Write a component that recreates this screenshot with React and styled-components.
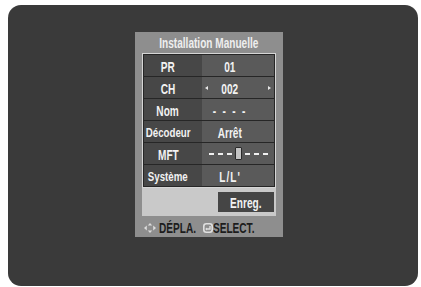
import React from "react";
import styled, { createGlobalStyle } from "styled-components";

const Global = createGlobalStyle`
  html, body { margin: 0; padding: 0; background: #ffffff; }
  body { font-family: "Liberation Sans", Arial, sans-serif; }
`;

const Page = styled.div`
  width: 421px;
  height: 287px;
  padding: 5px 3px 1px 8px;
  box-sizing: border-box;
  display: flex;
`;

const Screen = styled.div`
  flex: 1;
  background: #3a3a3a;
  border-radius: 13px;
  padding: 27px 0 0 127px;
  display: flex;
  align-items: flex-start;
`;

const Menu = styled.div`
  width: 148px;
  background: #8e8e8e;
  display: flex;
  flex-direction: column;
  font-weight: bold;
`;

const Narrow = styled.span`
  display: inline-block;
  white-space: nowrap;
  transform: scaleX(0.72);
  transform-origin: ${(p) => p.$origin || "center"};
  ${(p) => (p.$w ? `width: ${p.$w}px;` : "")}
`;

const Title = styled.div`
  height: 21px;
  line-height: 22px;
  text-align: center;
  color: #eeeeee;
  font-size: 14px;
`;

const Table = styled.div`
  margin: 0 7px;
  border: 1px solid #d6d6d6;
  background: #262626;
  padding: 1px;
  display: grid;
  grid-template-columns: 58px 72px;
  grid-auto-rows: 21px;
  row-gap: 1px;
`;

const Cell = styled.div`
  background: ${(p) => (p.$value ? "#5a5a5a" : "#474747")};
  color: #f2f2f2;
  font-size: ${(p) => (p.$small ? "13.5px" : "14px")};
  display: flex;
  align-items: center;
  justify-content: center;
  padding-right: ${(p) => (p.$flush ? "0" : p.$value ? "16px" : "10px")};
  padding-top: 2px;
  box-sizing: border-box;
  position: relative;
  letter-spacing: ${(p) => p.$spacing || 0}px;
`;

const Arrow = styled.span`
  position: absolute;
  top: 50%;
  ${(p) => (p.$right ? "right: 3px;" : "left: 3px;")}
  margin-top: -2px;
  width: 0;
  height: 0;
  border-top: 2.5px solid transparent;
  border-bottom: 2.5px solid transparent;
  ${(p) =>
    p.$right ? "border-left: 3px solid #e8e8e8;" : "border-right: 3px solid #e8e8e8;"}
`;

const Slider = styled.div`
  display: flex;
  align-items: center;
  gap: 4px;
  margin-top: -2px;
`;

const Dash = styled.span`
  width: 5px;
  height: 2px;
  background: #f0f0f0;
`;

const Thumb = styled.span`
  width: 5px;
  height: 11px;
  background: #c4c4c4;
  border: 1px solid #2a2a2a;
  border-radius: 1px;
  margin: 0 -1px;
`;

const SaveArea = styled.div`
  margin: 0 7px;
  height: 28px;
  background: #c9c9c9;
  display: flex;
  justify-content: flex-end;
  align-items: center;
  padding: 0 2px 0 0;
`;

const SaveButton = styled.div`
  width: 56px;
  height: 20px;
  background: #454545;
  color: #f2f2f2;
  font-size: 14px;
  display: flex;
  align-items: center;
  justify-content: center;
  padding-top: 1px;
  box-sizing: border-box;
`;

const Footer = styled.div`
  height: 21px;
  display: flex;
  align-items: center;
  padding: 2px 0 0 9px;
  box-sizing: border-box;
  color: #1c1c1c;
  font-size: 14px;
`;

const IconSlot = styled.span`
  display: flex;
  margin-right: ${(p) => p.$mr}px;
`;

const rows = [
  { label: "PR", value: "01" },
  { label: "CH", value: "002", arrows: true },
  { label: "Nom", value: "- - - -", spacing: 2.5 },
  { label: "Décodeur", value: "Arrêt", small: true },
  { label: "MFT", slider: true },
  { label: "Système", value: "L/L'", small: true, spacing: 1.5 },
];

const MoveIcon = () => (
  <svg width="12" height="10" viewBox="0 0 12 10">
    <g fill="#dcdcdc">
      <polygon points="0,5 2.8,2.6 2.8,7.4" />
      <polygon points="12,5 9.2,2.6 9.2,7.4" />
      <polygon points="6,0 3.8,2.4 8.2,2.4" />
      <polygon points="6,10 3.8,7.6 8.2,7.6" />
    </g>
  </svg>
);

const EnterIcon = () => (
  <svg width="10" height="10" viewBox="0 0 10 10">
    <rect x="0.8" y="0.8" width="8.4" height="8.4" rx="2.5" fill="none" stroke="#e0e0e0" strokeWidth="1.6" />
    <path d="M7 3 V6 H3.5" fill="none" stroke="#e0e0e0" strokeWidth="1.4" />
    <polygon points="2.2,6 4,4.6 4,7.4" fill="#e0e0e0" />
  </svg>
);

export default function App() {
  return (
    <>
      <Global />
      <Page>
        <Screen>
          <Menu>
            <Title>
              <Narrow>Installation Manuelle</Narrow>
            </Title>
            <Table>
              {rows.map((r) => (
                <React.Fragment key={r.label}>
                  <Cell $small={r.small}>
                    <Narrow>{r.label}</Narrow>
                  </Cell>
                  <Cell $value $spacing={r.spacing} $flush={r.slider}>
                    {r.arrows && <Arrow />}
                    {r.slider ? (
                      <Slider>
                        <Dash />
                        <Dash />
                        <Dash />
                        <Thumb />
                        <Dash />
                        <Dash />
                        <Dash />
                      </Slider>
                    ) : (
                      <Narrow>{r.value}</Narrow>
                    )}
                    {r.arrows && <Arrow $right />}
                  </Cell>
                </React.Fragment>
              ))}
            </Table>
            <SaveArea>
              <SaveButton>
                <Narrow>Enreg.</Narrow>
              </SaveButton>
            </SaveArea>
            <Footer>
              <IconSlot $mr={3}>
                <MoveIcon />
              </IconSlot>
              <Narrow $origin="left" $w={44}>DÉPLA.</Narrow>
              <IconSlot $mr={0}>
                <EnterIcon />
              </IconSlot>
              <Narrow $origin="left">SELECT.</Narrow>
            </Footer>
          </Menu>
        </Screen>
      </Page>
    </>
  );
}
